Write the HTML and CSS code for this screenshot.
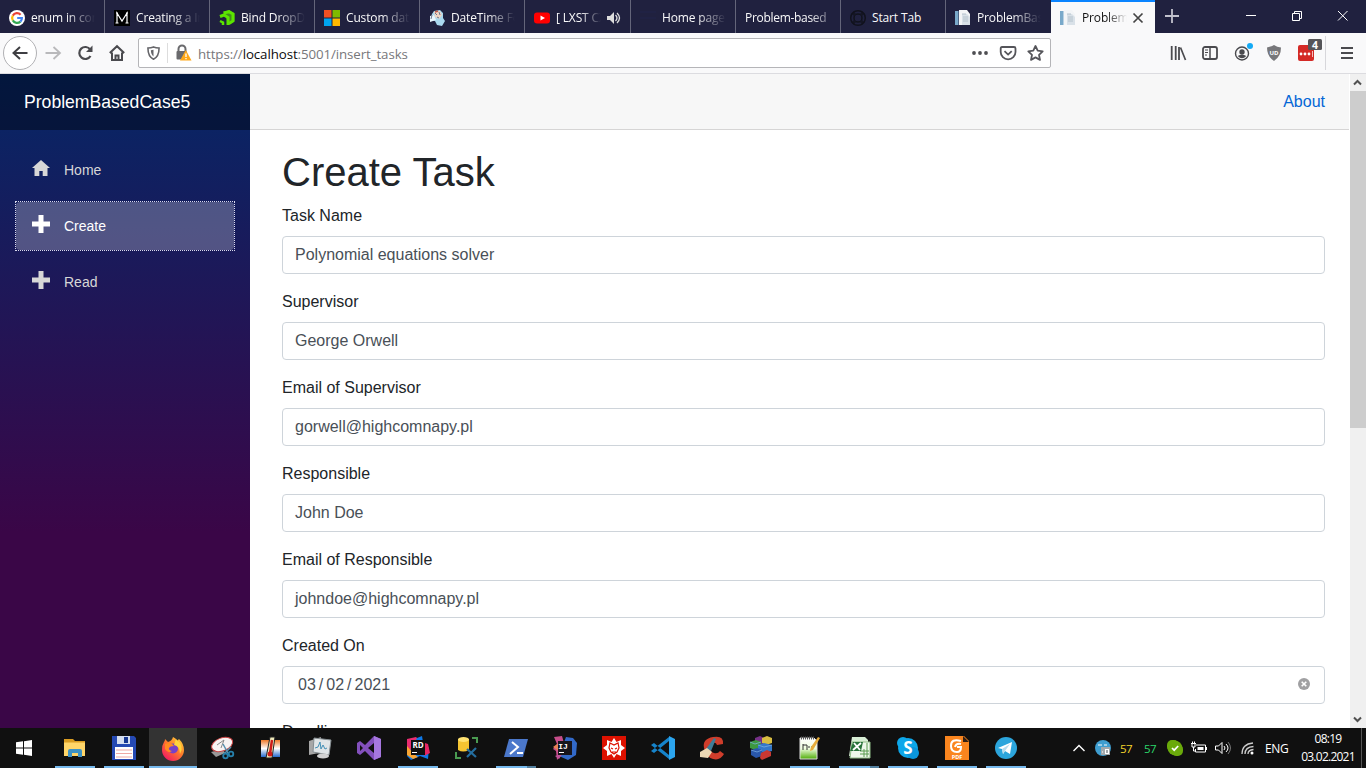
FILE: index.html
```html
<!DOCTYPE html>
<html lang="en">
<head>
<meta charset="utf-8">
<title>ProblemBasedCase5</title>
<link rel="stylesheet" href="styles.css">
</head>
<body>
<svg width="0" height="0" class="defs">
  <defs>
    <symbol id="page" viewBox="0 0 16 16"><path d="M0 1h3.500v14H0z" fill="#79a9ca"/><path d="M4 0h8l3 4v11H4z" fill="#f3f5f7"/><path d="M7 4h5l3 3v8H7z" fill="#d9e1e8"/><path d="M7 4h4M8 7h5M8 9h5M8 11h5" stroke="#b4c2cc"/></symbol>
    <symbol id="plus" viewBox="0 0 18 18"><path d="M6.500 0h5v6.500H18v5h-6.500V18h-5v-6.500H0v-5h6.500z" fill="currentColor"/></symbol>
  </defs>
</svg>
<header class="tabs">
  <div class="tab"><svg viewBox="0 0 16 16"><circle cx="8" cy="8" r="8" fill="#fff"/><g fill="none" stroke-width="2.2"><path d="M11.600 4.700A4.900 4.900 0 0 0 3.800 5.600" stroke="#ea4335"/><path d="M3.800 5.600a4.900 4.900 0 0 0 0 4.800" stroke="#fbbc05"/><path d="M3.800 10.400a4.900 4.900 0 0 0 7.600 1.200" stroke="#34a853"/><path d="M11.400 11.600A4.900 4.900 0 0 0 12.900 8H8.200" stroke="#4285f4"/></g></svg><span>enum in com</span></div>
  <div class="tab"><svg viewBox="0 0 16 16"><path d="M0 0h16v16H0z"/><path d="M3 13V3l5 8 5-8v10M2 3h2M12 3h2M1.500 13h3M11.500 13h3" fill="none" stroke="#fff" stroke-width="1.200"/></svg><span>Creating a In</span></div>
  <div class="tab"><svg viewBox="0 0 16 16"><g fill="none" stroke="#5ce500" stroke-width="3"><path d="M4.500 3L10 1.700 14 4v7l-4 2.500"/><path d="M1 6.500L5 5l4 2.500V15"/><path d="M1 11l3 1.500V15" stroke-width="2.500"/></g><path d="M5 2l5-2 5.500 3v8L10 15z" fill="#5ce500" opacity=".55"/></svg><span>Bind DropDo</span></div>
  <div class="tab"><svg viewBox="0 0 16 16"><path d="M0 0h7.500v7.500H0z" fill="#f25022"/><path d="M8.500 0H16v7.500H8.500z" fill="#7fba00"/><path d="M0 8.500h7.500V16H0z" fill="#00a4ef"/><path d="M8.500 8.500H16V16H8.500z" fill="#ffb900"/></svg><span>Custom date</span></div>
  <div class="tab"><svg viewBox="0 0 16 16"><path d="M5 1l6-1 3 3v5l2 3-3 5-5-1-2-4-5-1 2-6z" fill="#a9d8ee"/><path d="M5 2l6-1 2 4-3 4-4-2z" fill="#efd4c3"/><path d="M1 6l4-1 2 5-6 2z" fill="#e8f5fc"/><path d="M6 3l2 2M10 2l1 3M3 5L2 9M8 7l2 1" stroke="#68758c"/><path d="M6 2l3-1" stroke="#bd5747" stroke-width="1.500"/></svg><span>DateTime For</span></div>
  <div class="tab wide"><svg viewBox="0 0 16 16"><rect y="2.500" width="16" height="11" rx="3" fill="#f00"/><path d="M6.500 5.500v5L11 8z" fill="#fff"/></svg><span class="media">[ LXST CX</span><svg class="sound" viewBox="0 0 14 14"><path d="M0 5h3l4-4v12L3 9H0z" fill="#ddd"/><path d="M8.500 4q3 3 0 6M10 2q5 5 0 10" fill="none" stroke="#ddd" stroke-width="1.300"/></svg></div>
  <div class="tab"><svg viewBox="0 0 16 16"><path d="M0 2h16M0 8h16" stroke="#20254b"/></svg><span>Home page</span></div>
  <div class="tab noicon"><span>Problem-based</span></div>
  <div class="tab"><svg viewBox="0 0 16 16"><g fill="none" stroke="#11121d"><circle cx="8" cy="8" r="7.300" stroke-width="1.500"/><circle cx="8" cy="8" r="4"/><path d="M4 1v14M12 1v14M1 4h14M1 12h14" stroke-width="1"/></g></svg><span class="plain">Start Tab</span></div>
  <div class="tab last"><svg><use href="#page"/></svg><span>ProblemBas</span></div>
  <div class="tab active"><svg><use href="#page"/></svg><span>Problem</span><svg class="close" viewBox="0 0 10 10"><path d="M.5.5l9 9m0-9l-9 9" stroke="#444" stroke-width="1.700"/></svg></div>
  <svg class="newtab" viewBox="0 0 14 14"><path d="M7 0v14M0 7h14" stroke="#c1c1cd" stroke-width="1.800"/></svg>
  <svg class="winctl" viewBox="0 0 102 12"><g fill="none" stroke="#fff"><path d="M0 5.500h10M46.500 3.500h7v7h-7zM48.500 3.500v-2h7v7h-2M92 1l9.500 9.500m0-9.500L92 10.500"/></g></svg>
</header>
<nav class="toolbar">
  <div class="back"><svg viewBox="0 0 16 16"><path d="M15.500 8H1.500M8 2L1.500 8 8 14" fill="none" stroke="#3e3e42" stroke-width="2"/></svg></div>
  <svg class="fwd" viewBox="0 0 16 16"><path d="M.5 8h14M8.500 2L15 8l-6.500 6" fill="none" stroke="#b9b9bb" stroke-width="1.800"/></svg>
  <svg class="reload" viewBox="0 0 16 16"><path d="M13.200 4.500A6 6 0 1 0 13.500 11" fill="none" stroke="#4a4a4e" stroke-width="2.200"/><path d="M15.500.5V7H9z" fill="#4a4a4e"/></svg>
  <svg class="house" viewBox="0 0 16 16"><path d="M.8 8L8 1.200 15.200 8M3 7.500V15h10V7.500M6.500 15v-4.500h3V15" fill="none" stroke="#4a4a4e" stroke-width="2"/></svg>
  <div class="address">
    <svg class="shield" viewBox="0 0 14 16"><path d="M7 1.500C9 2.300 11 2.600 13 2.700c0 6-1.500 10-6 12-4.500-2-6-6-6-12 2-.1 4-.4 6-1.200z" fill="none" stroke="#66666a" stroke-width="1.700"/><path d="M7 4.500v7.300C5 10 4.200 8 4.200 5z" fill="#66666a"/></svg>
    <i class="bar"></i>
    <svg class="lock" viewBox="0 0 16 16"><path d="M2.500 7V4a3.500 3.500 0 0 1 7 0v3" fill="none" stroke="#6a6a6d" stroke-width="2"/><rect x=".5" y="6" width="10" height="8.500" rx="1" fill="#6a6a6d"/><path d="M9.800 5L15.500 15.500h-11.500z" fill="#ffa818"/><path d="M10 8.500v3.500M10 13v1.200" stroke="#fff" stroke-width="1.300"/></svg>
    <span class="url">https://<b>localhost</b>:5001/insert_tasks</span>
    <svg class="acts" viewBox="0 0 72 18"><g fill="#4e4e52"><circle cx="2" cy="9" r="1.900"/><circle cx="8" cy="9" r="1.900"/><circle cx="14" cy="9" r="1.900"/></g><g fill="none" stroke="#55555a" stroke-width="1.800"><path d="M30 3h12q1.500 0 1.500 1.500V8a7.200 7.200 0 0 1-14.800 0V4.500Q28.700 3 30 3z"/><path d="M32.500 7.200l3.600 3.400 3.600-3.400"/><path d="M63.500 2l2.200 4.700 5 .6-3.700 3.500 1 5.100-4.500-2.500-4.500 2.500 1-5.100-3.700-3.500 5-.6z" stroke-linejoin="round"/></g></svg>
  </div>
  <div class="tools">
    <svg viewBox="0 0 16 16"><path d="M1.700 1v14M5.700 1v14M9 2v13" stroke="#4a4a4e" stroke-width="1.800"/><path d="M10.500 2.500l5 12.500" stroke="#4a4a4e" stroke-width="1.700"/></svg>
    <svg viewBox="0 0 16 16"><rect x="1" y="2" width="14" height="12" rx="2" fill="none" stroke="#4a4a4e" stroke-width="1.800"/><path d="M8 2v12" stroke="#4a4a4e" stroke-width="1.500"/><path d="M3 5h3M3 7.500h3M3 10h2" stroke="#4a4a4e"/></svg>
    <svg viewBox="0 0 16 16" class="over"><circle cx="8" cy="8.500" r="6.500" fill="none" stroke="#4a4a4e" stroke-width="1.400"/><circle cx="8" cy="7" r="2.700" fill="#4a4a4e"/><path d="M3.700 11q4.300-2.500 8.600 0-4.300 4.500-8.600 0z" fill="#4a4a4e"/><circle cx="16" cy="1" r="3" fill="#14aaf5"/></svg>
    <svg viewBox="0 0 16 16"><path d="M8 0q3 2 7 2.500 0 9-7 13.500Q1 11.500 1 2.500 5 2 8 0z" fill="#77777a"/><text x="8" y="9.500" text-anchor="middle" font-size="6" font-weight="bold" fill="#fff" class="ui">UD</text></svg>
    <svg viewBox="0 0 16 16" class="over"><rect width="16" height="16" y="0" rx="2" fill="#d42a26"/><g fill="#fff"><circle cx="3" cy="9" r="1.400"/><circle cx="7" cy="9" r="1.400"/><circle cx="11" cy="9" r="1.400"/><path d="M14 6h.7v6H14z"/></g><rect x="10" y="-6" width="14" height="11" rx="1.500" fill="#555558"/><text x="17" y="3.500" text-anchor="middle" font-size="10.500" font-weight="bold" fill="#fff" class="ui">4</text></svg>
  </div>
  <i class="toolbar-line"></i>
  <svg class="menu" viewBox="0 0 12 14"><path d="M0 2h12M0 7h12M0 12h12" stroke="#4a4a4e" stroke-width="1.900"/></svg>
</nav>
<div class="app">
  <aside class="sidebar">
    <div class="brand">ProblemBasedCase5</div>
    <ul class="nav">
      <li><a><svg viewBox="0 0 18 18"><path d="M9 1l9 8h-2.500v8h-4.800v-5H7.300v5H2.500V9H0z" fill="currentColor"/></svg>Home</a></li>
      <li><a class="current"><svg><use href="#plus"/></svg>Create</a></li>
      <li><a><svg><use href="#plus"/></svg>Read</a></li>
    </ul>
  </aside>
  <main class="main">
    <div class="top-row"><a>About</a></div>
    <form class="content">
      <h1>Create Task</h1>
      <div class="group"><label>Task Name</label><div class="control">Polynomial equations solver</div></div>
      <div class="group"><label>Supervisor</label><div class="control">George Orwell</div></div>
      <div class="group"><label>Email of Supervisor</label><div class="control">gorwell@highcomnapy.pl</div></div>
      <div class="group"><label>Responsible</label><div class="control">John Doe</div></div>
      <div class="group"><label>Email of Responsible</label><div class="control">johndoe@highcomnapy.pl</div></div>
      <div class="group"><label>Created On</label><div class="control date"><span>03</span><span>/</span><span>02</span><span>/</span><span>2021</span><svg viewBox="0 0 12 12"><circle cx="6" cy="6" r="6" fill="#a0a0a2"/><path d="M3.700 3.700l4.600 4.600m0-4.600L3.700 8.300" stroke="#fff" stroke-width="1.600"/></svg></div></div>
      <div class="group"><label>Deadline</label><div class="control"></div></div>
    </form>
  </main>
  <div class="scrollbar">
    <svg viewBox="0 0 17 17"><path d="M5 10.500L8.500 7l3.500 3.500" fill="none" stroke="#505050" stroke-width="2"/></svg>
    <i class="thumb"></i>
    <svg viewBox="0 0 17 17"><path d="M5 6.500L8.500 10 12 6.500" fill="none" stroke="#505050" stroke-width="2"/></svg>
  </div>
</div>
<footer class="taskbar">
  <div class="start"><svg viewBox="0 0 16 16"><path d="M0 2.300L7 1.300v6.200H0zM8 1.200L16 0v7.500H8zM0 8.500h7v6.200l-7-1zM8 8.500h8V16l-8-1.200z" fill="#fff"/></svg></div>
  <div class="apps">
    <div class="on"><svg viewBox="0 0 24 24"><path d="M1 3h9l2 2h10v3H1z" fill="#d99c22"/><path d="M1 6.500h21V20H1z" fill="#ffd569"/><path d="M5 21v-6q0-2 2-2h10q2 0 2 2v6h-4v-4H9v4z" fill="#3d92c5"/></svg></div>
    <div class="on"><svg viewBox="0 0 24 24"><path d="M0 0h22l2 2v22H0z" fill="#2549b3"/><path d="M5 0h13v8H5z" fill="#d6dff0"/><path d="M12 1h4v6h-4z" fill="#173892"/><path d="M3 11h18v12H3z" fill="#fff"/><path d="M4 14h16M4 17.500h16M4 21h16" stroke="#eea9a4"/></svg></div>
    <div class="on focus"><svg viewBox="0 0 24 24"><defs><linearGradient id="fx" x1="1" x2=".2" y2="1"><stop stop-color="#ffe23e"/><stop offset=".5" stop-color="#ff7a2a"/><stop offset="1" stop-color="#f01565"/></linearGradient></defs><path d="M3 6q1-1 1-3l3 3q4-1 5-5 3 1 4 4l2-2q5 5 5 11a11 11 0 0 1-22 0Q1 9 3 6z" fill="url(#fx)"/><circle cx="12" cy="12.500" r="5" fill="#7640c8"/><path d="M4 8q6-3 9 2-4 0-5 2t3 3q-4 3-7-2z" fill="#ff8a20"/><path d="M15 3q9 7 4 15 0-8-6-9z" fill="#ffd43b"/></svg></div>
    <div><svg viewBox="0 0 24 24"><path d="M1 16l5 5 9-4-2-4z" fill="#999"/><ellipse cx="12" cy="8.500" rx="11" ry="6.500" fill="#f8f3f3" stroke="#c94444" transform="rotate(-20 12 8)"/><path d="M7 9l7-5-3 8" fill="none" stroke="#888"/><path d="M13 8l6 11M21 11l-7 7" stroke="#5991b0" stroke-width="1.500"/><g fill="none" stroke="#2680ab" stroke-width="1.800"><circle cx="15.500" cy="20" r="2.300"/><circle cx="21" cy="18" r="2.300"/></g></svg></div>
    <div><svg viewBox="0 0 24 24"><defs><linearGradient id="th" y2="1" x2="0"><stop stop-color="#f07928"/><stop offset=".5" stop-color="#fff"/><stop offset="1" stop-color="#2469cc"/></linearGradient></defs><path d="M2 4h19v17H2z" fill="url(#th)"/><path d="M11 1h5l-3 21H7z" fill="#ede8b9" stroke="#222"/><path d="M13 4l-2 14" stroke="#ce1b18" stroke-width="2.500"/><circle cx="11" cy="18" r="2.500" fill="#ce1b18"/></svg></div>
    <div><svg viewBox="0 0 24 24"><path d="M1 5l12-4-2 16-10 2z" fill="#a6a6a6"/><path d="M6 2l17 2-2 15-16-3z" fill="#e0e5e7" stroke="#858d91"/><path d="M7 12l3-1 2-5 1 7 2-4 2 4 2-1" fill="none" stroke="#438fb5"/><ellipse cx="15" cy="20" rx="6" ry="2.500" fill="#d2d2d2"/></svg></div>
    <div><svg viewBox="0 0 24 24"><path d="M17 0l7 3v18l-7 3-9-9-5 4-3-2V7l3-2 5 4zM3 9v6l3-3zM17 7l-6 5 6 5z" fill="#8350bd" fill-rule="evenodd"/><path d="M17 0l7 3v18l-7 3z" fill="#a677df"/></svg></div>
    <div class="on"><svg viewBox="0 0 24 24"><path d="M1 3l9-2 6 6-8 14-7-3z" fill="#e92c70"/><path d="M11 2l5-2 1 6 6 6-1 11-8-3-9 4-4-4z" fill="#0e79e8"/><path d="M1 10l7 8 4 3-5 2-6-4z" fill="#f8a532"/><path d="M16 6l6 2 2 9-6 3z" fill="#e82563"/><path d="M5 4h14v15H5z" fill="#101010"/><text x="12" y="12" text-anchor="middle" font-size="8" font-weight="bold" fill="#fff" class="ui">RD</text><path d="M6 16.500h5" stroke="#fff"/></svg></div>
    <div><svg viewBox="0 0 24 24"><path d="M3 3v11q5 3 11 0V3" fill="#f5c431"/><ellipse cx="8.500" cy="3.500" rx="5.500" ry="2.500" fill="#ffe271"/><path d="M17 2h5v5M1 16v6h5" fill="none" stroke="#4a9b51" stroke-width="2"/><path d="M12 13l9 8M21 12l-9 9" stroke="#246d9e" stroke-width="2.200"/></svg></div>
    <div class="on split"><svg viewBox="0 0 24 24"><path d="M5 3h19l-5 18H0z" fill="#4b78cb"/><path d="M8 6l6 5-8 7M13 17h6" fill="none" stroke="#fff" stroke-width="2"/></svg></div>
    <div><svg viewBox="0 0 24 24"><path d="M1 1l8-1 4 14-9 10-1-9-3-2 4-5z" fill="#c64d8a"/><path d="M13 1l7 1 4 5-1 12-8 5-9-4z" fill="#3269c8"/><path d="M0 11l7-5v10z" fill="#e98257"/><path d="M2 20l8-3-4 6z" fill="#bd5198"/><path d="M5 5h14v14H5z" fill="#17151c"/><text x="10" y="13" text-anchor="middle" font-size="8" font-weight="bold" fill="#fff" class="mono">IJ</text><path d="M6 16.500h5" stroke="#fff"/></svg></div>
    <div><svg viewBox="0 0 24 24"><path d="M0 0h24v24H0z" fill="#dd1100"/><path d="M12 2l2.500 4 4.500-2v5l4 3-4 3v5l-4.500-2-2.500 4-2.500-4L5 20v-5l-4-3 4-3V4l4.500 2z" fill="#fff"/><path d="M8 7l4 2 4-2 1 5-2 4-3 2-3-2-2-4zM9 12l2 1m4-1l-2 1M10 16h4" fill="none" stroke="#dd1100" stroke-width="1.200"/></svg></div>
    <div><svg viewBox="0 0 24 24"><path d="M0 9l3-2 15 12v4zM0 15l3 2L18 5V1z" fill="#1684cb"/><path d="M18 0l6 3v18l-6 3z" fill="#2ca5ee"/></svg></div>
    <div><svg viewBox="0 0 24 24"><path d="M23 8l-6 1q-1-3-4-2t-3 5 4 5 6-2l4 3q-4 7-11 5T4 12 13 1t10 7z" fill="#cf3d2b"/><path d="M14 2l2 1-5 12-5-2z" fill="#3f7d98"/><path d="M0 16l7-4 5 4-4 6-8-1z" fill="#ecd8b4"/></svg></div>
    <div><svg viewBox="0 0 24 24"><path d="M6 2l5-2 4 2v5l-5 2-4-2z" fill="#763187"/><path d="M13 2l5-2 5 2v5l-6 2-4-2z" fill="#d8bd42"/><path d="M1 6l6-2 5 2v6l-6 2-5-2z" fill="#3d9840"/><path d="M9 9l6-2 8 2v6l-8 2-6-2z" fill="#3478c9"/><path d="M2 14l6-2 5 2v6l-6 2-5-3z" fill="#2957aa"/><path d="M12 17l6-3 4 2v4l-9 4-2-2z" fill="#c93832"/><path d="M9 9l6 2 8-2M2 14l6 2 5-2M1 6l5 2 6-2" fill="none" stroke="#80b4e7" stroke-width=".7"/></svg></div>
    <div class="on"><svg viewBox="0 0 24 24"><defs><linearGradient id="np" x2="0" y2="1"><stop stop-color="#fff"/><stop offset=".5" stop-color="#efffde"/><stop offset="1" stop-color="#4fac08"/></linearGradient></defs><path d="M2 2h14l3 3v18H2z" fill="url(#np)" stroke="#ddd"/><path d="M3 2h13" stroke="#555" stroke-width="3" stroke-dasharray="1 1"/><path d="M5 8v6M5 9h4v5m1-3h2m1 0h2" stroke="#333" fill="none"/><path d="M20 1l2 1-7 12-3 1 1-4z" fill="#e7ad3a"/></svg></div>
    <div class="on split"><svg viewBox="0 0 24 24"><path d="M5 1h13l3 3v16H2z" fill="#d9efd6"/><path d="M5 6h18v16H3z" fill="#edf7ea" stroke="#8ebb86"/><path d="M13 15h9M13 18h9M17 13v8M20 7v14" stroke="#5b9c50"/><path d="M6 6h10l-2 9H3z" fill="#28733a"/><path d="M7 7l6 7m1-7l-8 7" stroke="#fff" stroke-width="1.800"/></svg></div>
    <div class="on"><svg viewBox="0 0 24 24"><circle cx="12" cy="12" r="10" fill="#0da7ea"/><circle cx="7" cy="7" r="6" fill="#0da7ea"/><circle cx="17" cy="17" r="6" fill="#0b96dc"/><text x="12" y="18" text-anchor="middle" font-size="17" font-weight="bold" fill="#fff" class="ui">S</text></svg></div>
    <div class="on"><svg viewBox="0 0 24 24"><path d="M0 0h19l5 5v19H0z" fill="#fa851e"/><path d="M18 0v6h6z" fill="#322015"/><path d="M16 5Q6 2 6 10q0 6 6 6 4 0 4-5h-4m4-3q-5-1-6 3" fill="none" stroke="#fff" stroke-width="2"/><text x="12" y="22.500" text-anchor="middle" font-size="5.500" font-weight="bold" fill="#fff" class="ui">PDF</text></svg></div>
    <div class="on"><svg viewBox="0 0 24 24"><circle cx="12" cy="12" r="11" fill="#2ca5dc"/><path d="M4 12l14-6-2 12-5-3-2 3-1-5z" fill="#fff"/><path d="M8 13l8-5-5 7-2 3z" fill="#b9dced"/></svg></div>
  </div>
  <div class="tray">
    <svg class="chev" viewBox="0 0 12 8"><path d="M.5 7L6 1.500 11.500 7" fill="none" stroke="#fff" stroke-width="1.400"/></svg>
    <svg class="ic" viewBox="0 0 16 16"><circle cx="8" cy="8" r="8" fill="#3f9ed0"/><path d="M6 7h9v8H6z" fill="#a2a9ad"/><path d="M3 5h4m2 0h3M7 12h1" stroke="#fff" fill="none"/><rect x="10.500" y="9.500" width="3" height="4" fill="none" stroke="#fff"/></svg>
    <span class="num yellow">57</span><span class="num green">57</span>
    <svg class="ic skype" viewBox="0 0 16 16"><rect width="12" height="12" rx="5" fill="#6aaa0b"/><rect x="4" y="4" width="12" height="12" rx="5" fill="#6aaa0b"/><circle cx="8" cy="8" r="7.300" fill="#6aaa0b"/><path d="M5 8l2.200 2.200L11.200 6" fill="none" stroke="#fff" stroke-width="1.700"/></svg>
    <svg class="ic battery" viewBox="0 0 16 16"><path d="M5 5h9.500v7H4.500V9M15.500 7v3M0 3.500h5M1 3v4h3V3M2.500 7v4h2M1.500 1.500v2m2-2v2" fill="none" stroke="#fff"/><path d="M6.500 7h6v3h-6z" fill="#fff"/></svg>
    <svg class="ic speaker" viewBox="0 0 16 16"><path d="M.5 6h3L7 2.500v11L3.500 10h-3zM9 6q2 2 0 4M11 4q4 4 0 8" fill="none" stroke="#fff"/><path d="M13 2q5 6 0 12" fill="none" stroke="#777"/></svg>
    <svg class="wifi" viewBox="0 0 14 14"><path d="M1 13Q1 3 12 2M4 13q0-7 8.500-7.500M7 13q0-4 5.500-4.500" fill="none" stroke="#ccc" stroke-width="1.300"/><circle cx="11" cy="12" r="1.500" fill="#fff"/></svg>
    <span class="lang">ENG</span>
    <div class="clock"><span>08:19</span><span>03.02.2021</span></div>
    <i class="peek"></i>
  </div>
</footer>
</body>
</html>
```
FILE: styles.css
```css
* { box-sizing: border-box; }
body { margin: 0; width: 1366px; height: 768px; overflow: hidden; display: flex; flex-direction: column; background: #fff; font-family: "Liberation Sans", Arial, sans-serif; }
svg { display: block; flex: none; overflow: visible; }
.defs { position: absolute; }
.ui { font-family: "Open Sans", sans-serif; }
.mono { font-family: "Liberation Mono", monospace; }

.tabs { height: 33px; flex: none; display: flex; background: #20213f; font: 12px "Open Sans", "Noto Sans", sans-serif; letter-spacing: -.15px; color: #f9f9fa; }
.tab { width: 105px; height: 33px; flex: none; display: flex; align-items: center; gap: 6px; padding: 2px 9px 0; border-right: 1px solid #64657a; }
.tab > svg { width: 16px; height: 16px; }
.tab.wide { width: 106px; }
.tab.last { border-right-color: transparent; }
.tab > span { flex: 1; min-width: 0; white-space: nowrap; overflow: hidden; -webkit-mask-image: linear-gradient(90deg, #000 55%, transparent); mask-image: linear-gradient(90deg, #000 55%, transparent); }
.tab.noicon > span { -webkit-mask-image: linear-gradient(90deg, #000 75%, #0004); mask-image: linear-gradient(90deg, #000 75%, #0004); letter-spacing: -.3px; }
.tab > .plain { -webkit-mask-image: none; mask-image: none; }
.tab > .sound { width: 14px; height: 14px; }
.tab.active { width: 104px; background: #f9f9fa; color: #111; border-right: 0; border-top: 2px solid #0a84ff; padding-top: 0; }
.tab > .close { width: 10px; height: 10px; margin-right: 3px; }
.newtab { width: 14px; height: 14px; margin: 9px 0 0 10px; }
.winctl { width: 102px; height: 12px; margin: 10px 0 0 67px; }

.toolbar { height: 41px; flex: none; display: flex; align-items: center; background: #f9f9fa; border-bottom: 1px solid #dcdce0; padding: 0 0 1px 3px; }
.back { width: 34px; height: 34px; border: 1px solid #b1b1b4; border-radius: 50%; display: grid; place-items: center; background: #fff; }
.back svg, .fwd, .reload, .house { width: 16px; height: 16px; }
.fwd { margin-left: 8px; }
.reload { margin-left: 16px; }
.house { margin-left: 16px; }
.address { width: 913px; height: 30px; margin-left: 13px; background: #fff; border: 1px solid #b5b5b8; border-radius: 2px; display: flex; align-items: center; }
.shield { width: 13px; height: 16px; margin-left: 8px; }
.bar { width: 1px; height: 20px; background: #ddd; margin: 0 8px 0 7px; }
.lock { width: 16px; height: 16px; }
.url { margin: 2px 0 0 6px; flex: 1; font: 13.300px "Open Sans", sans-serif; letter-spacing: -.09px; color: #77777b; white-space: nowrap; }
.url b { font-weight: 400; color: #0c0c0d; }
.acts { width: 72px; height: 18px; margin-right: 6px; }
.tools { display: flex; gap: 16px; margin-left: 119px; }
.tools svg { width: 16px; height: 16px; }
.toolbar-line { width: 1px; height: 34px; background: #d7d7db; margin-left: 11px; }
.menu { width: 12px; height: 14px; margin-left: 15px; }

.app { height: 654px; flex: none; display: flex; overflow: hidden; }
.sidebar { width: 250px; flex: none; background: linear-gradient(180deg, #052767 0%, #3a0647 70%); }
.brand { height: 56px; padding-left: 24px; line-height: 57px; font-size: 17.600px; color: #fff; background: rgba(0,0,0,.4); }
.nav { list-style: none; margin: 0; padding: 16px 16px 0 16px; display: flex; flex-direction: column; gap: 8px; }
.nav a { height: 48px; display: flex; align-items: center; gap: 14px; padding-left: 16px; border-radius: 4px; font-size: 14px; color: #d7d7d7; }
.nav svg { width: 18px; height: 18px; margin-top: -4px; }
.nav li:has(.current) { margin: -1px -1px -1px -1px; border: 1px dotted #d8d8ec; }
.nav .current { color: #fff; background: rgba(255,255,255,.25); }
.main { flex: 1; min-width: 0; }
.top-row { height: 56px; background: #f7f7f7; border-bottom: 1px solid #d6d5d5; display: flex; align-items: center; justify-content: flex-end; padding-right: 24px; font-size: 16px; color: #0366d6; }
.content { padding: 17.600px 24px 0 32px; color: #212529; font-size: 16px; line-height: 24px; }
h1 { font-size: 40px; line-height: 48px; font-weight: 400; margin: 0 0 8px; }
.group { margin-bottom: 16px; }
.group label { display: block; margin-bottom: 8px; }
.control { height: 38px; padding: 6px 12px; border: 1px solid #ced4da; border-radius: 4px; color: #495057; }
.date { display: flex; gap: 3px; padding-left: 15px; align-items: center; }
.date svg { width: 12px; height: 12px; margin: -1px 2px 0 auto; }
.scrollbar { width: 17px; flex: none; background: #f0f0f0; border-left: 1px solid #fff; display: flex; flex-direction: column; }
.scrollbar svg { width: 17px; height: 17px; margin-left: -1px; }
.thumb { height: 337px; background: #cdcdcd; margin-bottom: auto; }

.taskbar { height: 40px; flex: none; display: flex; background: #101010; color: #fff; font: 12px "Open Sans", sans-serif; }
.start { width: 48px; margin-right: 3px; display: grid; place-items: center; }
.start svg { width: 16px; height: 16px; }
.apps { display: flex; gap: 1px; }
.apps > div { width: 48px; height: 40px; display: flex; flex-direction: column; align-items: center; padding-top: 8px; }
.apps svg { width: 24px; height: 24px; }
.apps .on::after { content: ""; width: 40px; height: 2px; margin-top: 6px; background: #76b9ed; }
.apps .split::after { background: linear-gradient(90deg, #76b9ed 31px, #53809f 31px); }
.apps .focus { background: #333; margin: 0 0 0 -2px; width: 48px; }
.apps .focus + div { margin-left: 2px; }
.apps .focus { margin-left: 0; }
.apps .focus + div { margin-left: 0; }
.apps .focus::after { width: 48px; }
.tray { flex: 1; display: flex; align-items: center; padding-left: 43px; }
.chev { width: 12px; height: 8px; }
.ic { width: 16px; height: 16px; margin-left: 10px; }
.num { width: 12px; margin-left: 9px; font-size: 11.500px; letter-spacing: -.5px; }
.num + .num { margin-left: 12px; }
.yellow { color: #f4d52b; }
.green { color: #2bd66a; }
.skype { margin-left: 11px; }
.battery, .speaker { margin-left: 8px; }
.wifi { width: 14px; height: 14px; margin-left: 10px; }
.lang { width: 24px; margin-left: 10px; letter-spacing: -.3px; }
.clock { width: 56px; margin-left: 11px; display: flex; flex-direction: column; align-items: center; line-height: 18px; letter-spacing: -.75px; white-space: nowrap; margin-top: -1px; }
.peek { width: 1px; height: 40px; background: #555; margin-left: 5px; }
```
